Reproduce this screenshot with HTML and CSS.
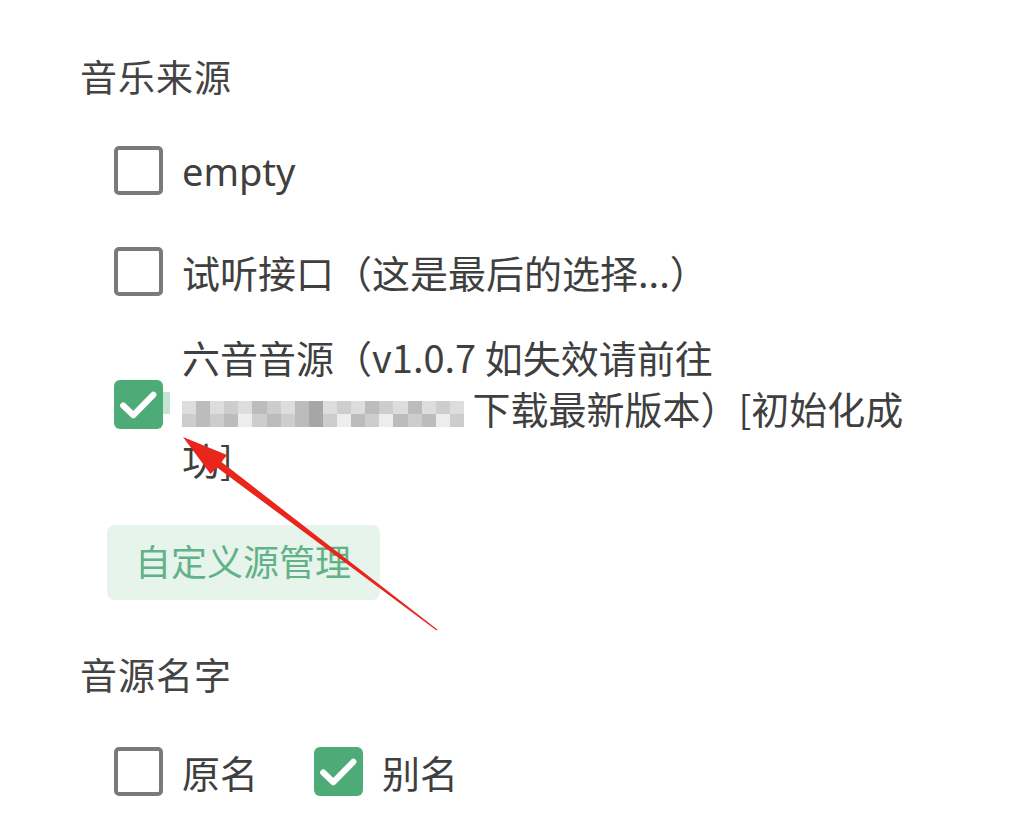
FILE: index.html
```html
<!DOCTYPE html>
<html lang="zh-CN">
<head>
<meta charset="utf-8">
<title>音乐来源</title>
<link rel="stylesheet" href="styles.css">
</head>
<body>
<div class="page">
  <h2 class="section-title first">音乐来源</h2>
  <div class="options">
    <label class="option row1">
      <span class="box"></span>
      <span class="label latin">empty</span>
    </label>
    <label class="option row2">
      <span class="box"></span>
      <span class="label">试听接口（这是最后的选择...）</span>
    </label>
    <label class="option row3">
      <span class="box checked tab">
        <svg viewBox="0 0 48 48" class="tick"><path d="M9 25 L19 34.5 L38.5 14.5" /></svg>
      </span>
      <span class="label multi">六音音源（v1.0.7 如失效请前往<br><span class="blur"><span class="px a"></span><span class="px b"></span><span class="px a"></span><span class="px c"></span><span class="px a"></span><span class="px b"></span><span class="px c"></span><span class="px a"></span><span class="px b"></span><span class="px d"></span><span class="px a"></span><span class="px c"></span><span class="px a"></span><span class="px b"></span><span class="px c"></span><span class="px a"></span><span class="px b"></span><span class="px a"></span><span class="px c"></span><span class="px a"></span><span class="px c"></span><span class="px b"></span><span class="px c"></span><span class="px b"></span><span class="px e"></span><span class="px c"></span><span class="px b"></span><span class="px c"></span><span class="px b"></span><span class="px d"></span><span class="px c"></span><span class="px e"></span><span class="px b"></span><span class="px c"></span><span class="px e"></span><span class="px b"></span><span class="px c"></span><span class="px b"></span><span class="px e"></span><span class="px c"></span></span> 下载最新版本）[初始化成<br>功]</span>
    </label>
  </div>
  <button class="manage-btn">自定义源管理</button>
  <h2 class="section-title second">音源名字</h2>
  <div class="inline-options">
    <label class="option">
      <span class="box"></span>
      <span class="label">原名</span>
    </label>
    <label class="option">
      <span class="box checked">
        <svg viewBox="0 0 48 48" class="tick"><path d="M9 25 L19 34.5 L38.5 14.5" /></svg>
      </span>
      <span class="label">别名</span>
    </label>
  </div>
  <svg class="arrow" viewBox="0 0 1024 817" width="1024" height="817">
    <polygon points="183,437 227,455 221.5,462 437.4,629.6 436.6,630.4 217,467.5 210.5,474" />
  </svg>
</div>
</body>
</html>
```

FILE: styles.css
```css
html, body {
  margin: 0;
  padding: 0;
  background: #ffffff;
}

body {
  font-family: "Noto Sans CJK SC", "Noto Sans", sans-serif;
  color: #3d3d3d;
  width: 1024px;
  height: 817px;
  overflow: hidden;
}

.page {
  position: relative;
  padding-top: 50px;
  height: 767px;
}

.section-title {
  margin: 0 0 0 80px;
  font-size: 37px;
  font-weight: 400;
  line-height: 52px;
  color: #444;
  letter-spacing: 1px;
}

.section-title.second {
  margin-top: 48px;
}

.options {
  margin-left: 114px;
  margin-top: 44px;
  display: flex;
  flex-direction: column;
}

.option {
  display: flex;
  align-items: center;
  gap: 19px;
}

.row2 {
  margin-top: 52px;
}

.row3 {
  margin-top: 35px;
}

.box {
  position: relative;
  box-sizing: border-box;
  width: 49px;
  height: 49px;
  flex: none;
  border: 4px solid #7a7a7a;
  border-radius: 5px;
  background: #fff;
}

.box.checked {
  border: none;
  background: #4dab77;
  border-radius: 6px;
}

.row3 .box {
  margin-bottom: 7px;
}

.box.tab::after {
  content: "";
  position: absolute;
  left: 49px;
  top: 12px;
  width: 7px;
  height: 22px;
  background: #c4e5d1;
}

.tick {
  display: block;
  width: 49px;
  height: 49px;
}

.tick path {
  fill: none;
  stroke: #ffffff;
  stroke-width: 6;
  stroke-linecap: round;
  stroke-linejoin: round;
}

.label {
  font-size: 38px;
  line-height: 48px;
  color: #3f3f3f;
}

.label.latin {
  font-family: "Noto Sans", "Noto Sans CJK SC", sans-serif;
  font-size: 38px;
}

.label.multi {
  line-height: 51px;
}

.blur {
  display: inline-flex;
  flex-wrap: wrap;
  width: 282px;
  height: 26px;
  vertical-align: middle;
  opacity: 0.9;
}

.px {
  width: 14.1px;
  height: 13px;
}

.px.a { background: #dadada; }
.px.b { background: #b5b5b5; }
.px.c { background: #c8c8c8; }
.px.d { background: #9d9d9d; }
.px.e { background: #ececec; }

.manage-btn {
  display: block;
  margin: 41px 0 0 107px;
  width: 273px;
  height: 75px;
  border: none;
  border-radius: 8px;
  background: #e7f4ec;
  color: #62b287;
  font-family: "Noto Sans CJK SC", sans-serif;
  font-size: 36px;
  text-align: left;
  padding: 0 0 5px 28px;
}

.inline-options {
  display: flex;
  margin: 47px 0 0 114px;
  gap: 56px;
}

.arrow {
  position: absolute;
  left: 0;
  top: 0;
  pointer-events: none;
}

.arrow polygon {
  fill: #e8261c;
}
```
